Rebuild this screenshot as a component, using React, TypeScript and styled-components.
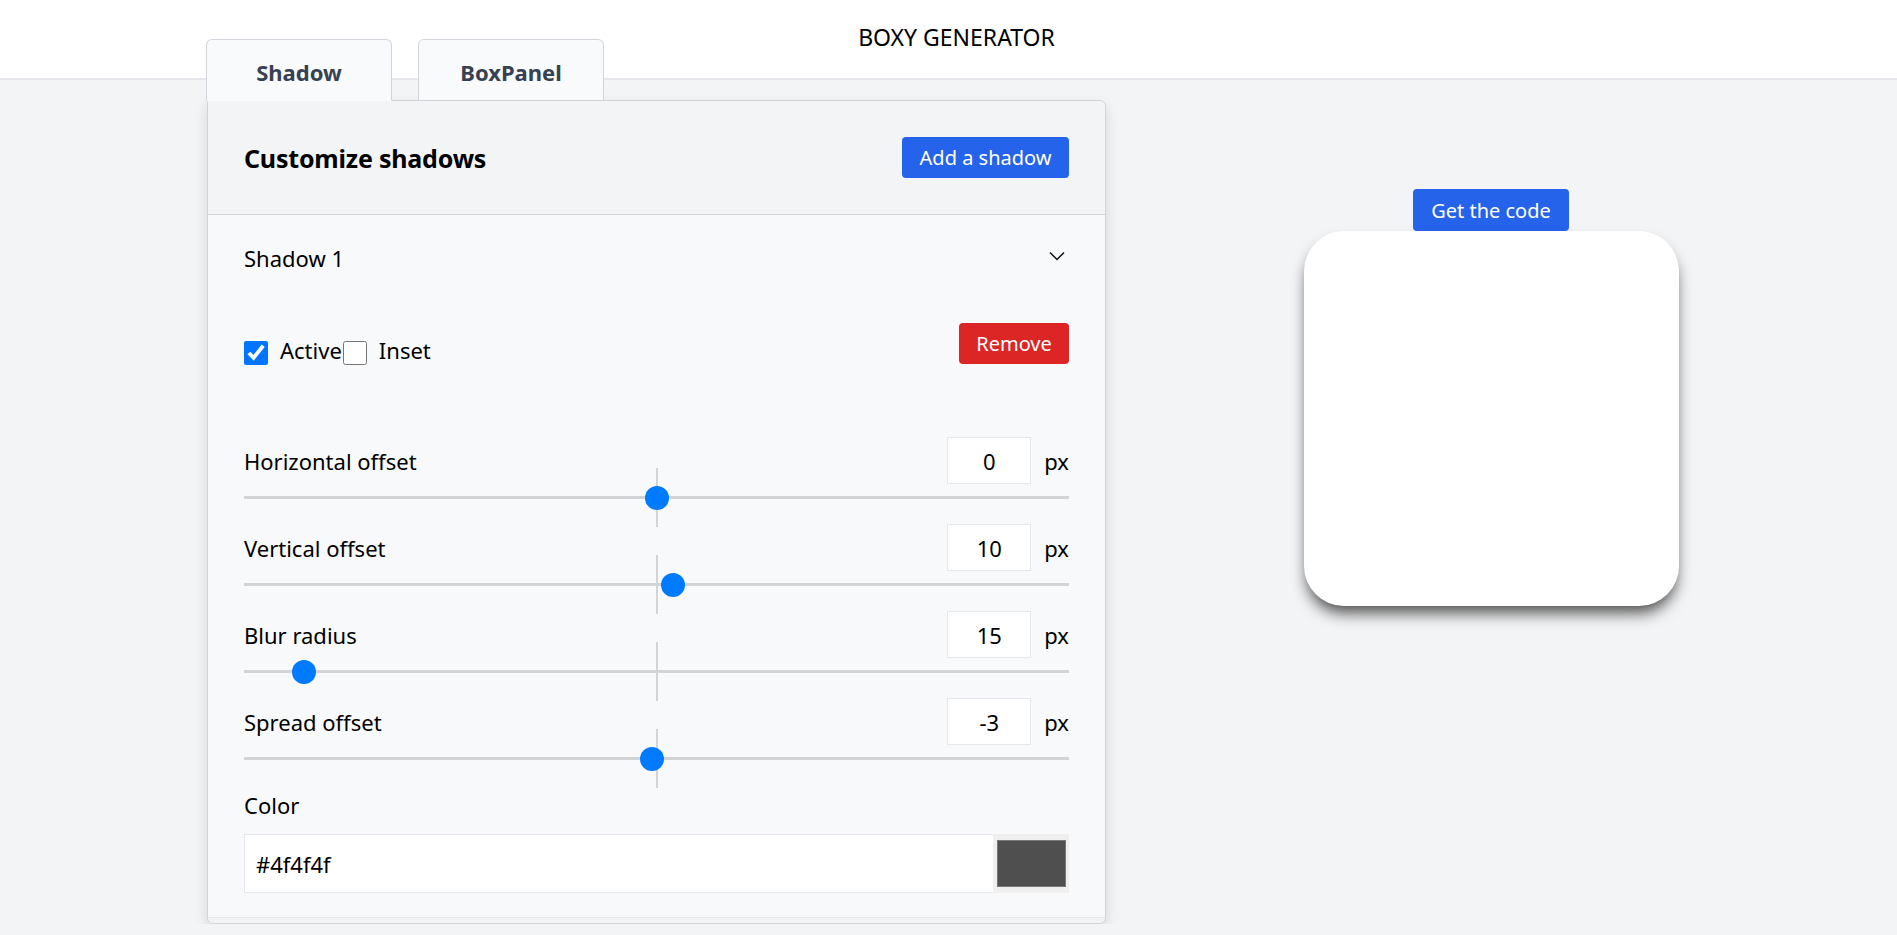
import React from "react";
import styled, { createGlobalStyle } from "styled-components";

const Global = createGlobalStyle`
  html, body { margin: 0; padding: 0; }
  body {
    background: #f3f4f6;
    font-family: "Noto Sans", "Open Sans", Arial, sans-serif;
    color: #000;
  }
  * { box-sizing: border-box; }
`;

const Header = styled.header`
  height: 80px;
  background: #fff;
  border-bottom: 2px solid #e5e7eb;
  display: flex;
  justify-content: center;
  padding-top: 21px;
  padding-left: 16px;
  font-size: 23px;
  line-height: 32px;
`;

const Main = styled.main`
  margin-top: -41px;
  display: flex;
  align-items: flex-start;
  padding-left: 206px;
`;

const LeftColumn = styled.div`
  width: 900px;
  display: flex;
  flex-direction: column;
`;

const Tabs = styled.div`
  display: flex;
  gap: 26px;
  position: relative;
  z-index: 1;
  margin-bottom: -1px;
`;

const Tab = styled.button<{ $active?: boolean }>`
  width: 186px;
  height: 62px;
  background: #f9fafb;
  border: 1px solid #d1d5db;
  border-bottom: ${(p) => (p.$active ? "1px solid #f9fafb" : "1px solid #d1d5db")};
  border-radius: 6px 6px 0 0;
  font-family: inherit;
  font-weight: 700;
  font-size: 22px;
  color: #374151;
  padding: 4px 0 0;
  cursor: pointer;
`;

const Panel = styled.section`
  margin-left: 1px;
  width: 899px;
  border: 1px solid #d1d5db;
  border-radius: 0 6px 6px 6px;
  background: #f3f4f6;
  box-shadow: 0 6px 14px rgba(0, 0, 0, 0.12);
  padding-bottom: 5px;
  overflow: hidden;
`;

const PanelHeader = styled.div`
  height: 114px;
  padding: 0 36px;
  display: flex;
  align-items: center;
  justify-content: space-between;
  border-bottom: 1px solid #d1d5db;
`;

const PanelTitle = styled.h2`
  margin: 0;
  font-size: 25px;
  font-weight: 700;
  letter-spacing: -0.2px;
`;

const Button = styled.button<{ $color: string; $w: number }>`
  background: ${(p) => p.$color};
  color: #fff;
  border: none;
  border-radius: 4px;
  height: 41px;
  width: ${(p) => p.$w}px;
  font-family: inherit;
  font-size: 20px;
  padding: 0;
  cursor: pointer;
`;

const Body = styled.div`
  background: #f8f9fa;
  padding: 0 36px 24px;
  border-bottom: 1px solid #e5e7eb;
`;

const ItemTitle = styled.div`
  height: 86px;
  display: flex;
  align-items: center;
  justify-content: space-between;
  font-size: 22px;
`;

const Chevron = styled.svg`
  width: 16px;
  height: 10px;
  margin-right: 4px;
  margin-bottom: 4px;
`;

const ToggleRow = styled.div`
  margin-top: 22px;
  height: 41px;
  display: flex;
  align-items: center;
  justify-content: space-between;
`;

const Checks = styled.div`
  display: flex;
  align-items: center;
  padding-top: 18px;
  font-size: 22px;
`;

const CheckLabel = styled.span`
  padding-bottom: 6px;
`;

const Check = styled.input<{ $flush?: boolean }>`
  width: 24px;
  height: 24px;
  margin: 0 12px 0 ${(p) => (p.$flush ? "1px" : "0")};
  accent-color: #0075ff;
`;

const Sliders = styled.div`
  margin-top: 73px;
  display: flex;
  flex-direction: column;
  gap: 13px;
`;

const SliderBlock = styled.div`
  display: flex;
  flex-direction: column;
`;

const LabelRow = styled.div`
  height: 47px;
  display: flex;
  align-items: center;
  justify-content: space-between;
  font-size: 22px;
`;

const NumberBox = styled.div`
  display: flex;
  align-items: center;
  gap: 13px;
`;

const NumInput = styled.input`
  width: 84px;
  height: 47px;
  border: 1px solid #e5e7eb;
  background: #fff;
  text-align: center;
  font-family: inherit;
  font-size: 22px;
  color: #000;
  padding: 0;
`;

const RangeWrap = styled.div`
  position: relative;
  height: 27px;
`;

const Tick = styled.span`
  position: absolute;
  left: 50%;
  top: -16px;
  width: 2px;
  margin-left: -1px;
  height: 59px;
  background: #d4d4d8;
`;

const Range = styled.input`
  position: relative;
  z-index: 1;
  -webkit-appearance: none;
  appearance: none;
  width: 100%;
  height: 27px;
  margin: 0;
  background: transparent;
  &::-webkit-slider-runnable-track {
    height: 3px;
    background: #d4d4d8;
  }
  &::-webkit-slider-thumb {
    -webkit-appearance: none;
    width: 24px;
    height: 24px;
    border-radius: 50%;
    background: #007bff;
    border: none;
    margin-top: -10.5px;
  }
`;

const ColorLabel = styled.div`
  margin-top: 19px;
  height: 28px;
  display: flex;
  align-items: center;
  font-size: 22px;
`;

const ColorRow = styled.div`
  margin-top: 15px;
  display: flex;
  height: 59px;
`;

const HexInput = styled.input`
  flex: 1;
  height: 59px;
  border: 1px solid #e5e7eb;
  border-right: none;
  background: #fff;
  font-family: inherit;
  font-size: 22px;
  padding: 0 11px;
  color: #000;
`;

const Swatch = styled.input`
  -webkit-appearance: none;
  appearance: none;
  width: 76px;
  height: 59px;
  border: none;
  padding: 0;
  margin: 0;
  background: #efefef;
  &::-webkit-color-swatch-wrapper {
    padding: 6px 3px 6px 4px;
  }
  &::-webkit-color-swatch {
    border: 1px solid #777;
    border-radius: 0;
  }
`;

const RightColumn = styled.div`
  width: 770px;
  padding-top: 150px;
  display: flex;
  flex-direction: column;
  align-items: center;
`;

const PreviewBox = styled.div`
  width: 375px;
  height: 375px;
  background: #fff;
  border-radius: 40px;
`;

const sliders = [
  { label: "Horizontal offset", value: 0, min: -250, max: 250 },
  { label: "Vertical offset", value: 10, min: -250, max: 250 },
  { label: "Blur radius", value: 15, min: 0, max: 250 },
  { label: "Spread offset", value: -3, min: -250, max: 250 },
];

export default function App() {
  return (
    <>
      <Global />
      <Header>BOXY GENERATOR</Header>
      <Main>
        <LeftColumn>
          <Tabs>
            <Tab $active>Shadow</Tab>
            <Tab>BoxPanel</Tab>
          </Tabs>
          <Panel>
            <PanelHeader>
              <PanelTitle>Customize shadows</PanelTitle>
              <Button $color="#2563eb" $w={167}>Add a shadow</Button>
            </PanelHeader>
            <Body>
              <ItemTitle>
                <span>Shadow 1</span>
                <Chevron viewBox="0 0 16 10">
                  <polyline points="1,1.5 8,8.5 15,1.5" fill="none" stroke="#111" strokeWidth="1.5" />
                </Chevron>
              </ItemTitle>
              <ToggleRow>
                <Checks>
                  <Check type="checkbox" defaultChecked />
                  <CheckLabel>Active</CheckLabel>
                  <Check type="checkbox" $flush />
                  <CheckLabel>Inset</CheckLabel>
                </Checks>
                <Button $color="#dc2626" $w={110}>Remove</Button>
              </ToggleRow>
              <Sliders>
                {sliders.map((s) => (
                  <SliderBlock key={s.label}>
                    <LabelRow>
                      <span>{s.label}</span>
                      <NumberBox>
                        <NumInput type="text" defaultValue={String(s.value)} />
                        <span>px</span>
                      </NumberBox>
                    </LabelRow>
                    <RangeWrap>
                      <Tick />
                      <Range type="range" min={s.min} max={s.max} defaultValue={s.value} />
                    </RangeWrap>
                  </SliderBlock>
                ))}
              </Sliders>
              <ColorLabel>Color</ColorLabel>
              <ColorRow>
                <HexInput type="text" defaultValue="#4f4f4f" />
                <Swatch type="color" defaultValue="#4f4f4f" />
              </ColorRow>
            </Body>
          </Panel>
        </LeftColumn>
        <RightColumn>
          <Button $color="#2563eb" $w={156} style={{ height: 42 }}>Get the code</Button>
          <PreviewBox style={{ boxShadow: "0px 10px 15px -3px #4f4f4f" }} />
        </RightColumn>
      </Main>
    </>
  );
}
